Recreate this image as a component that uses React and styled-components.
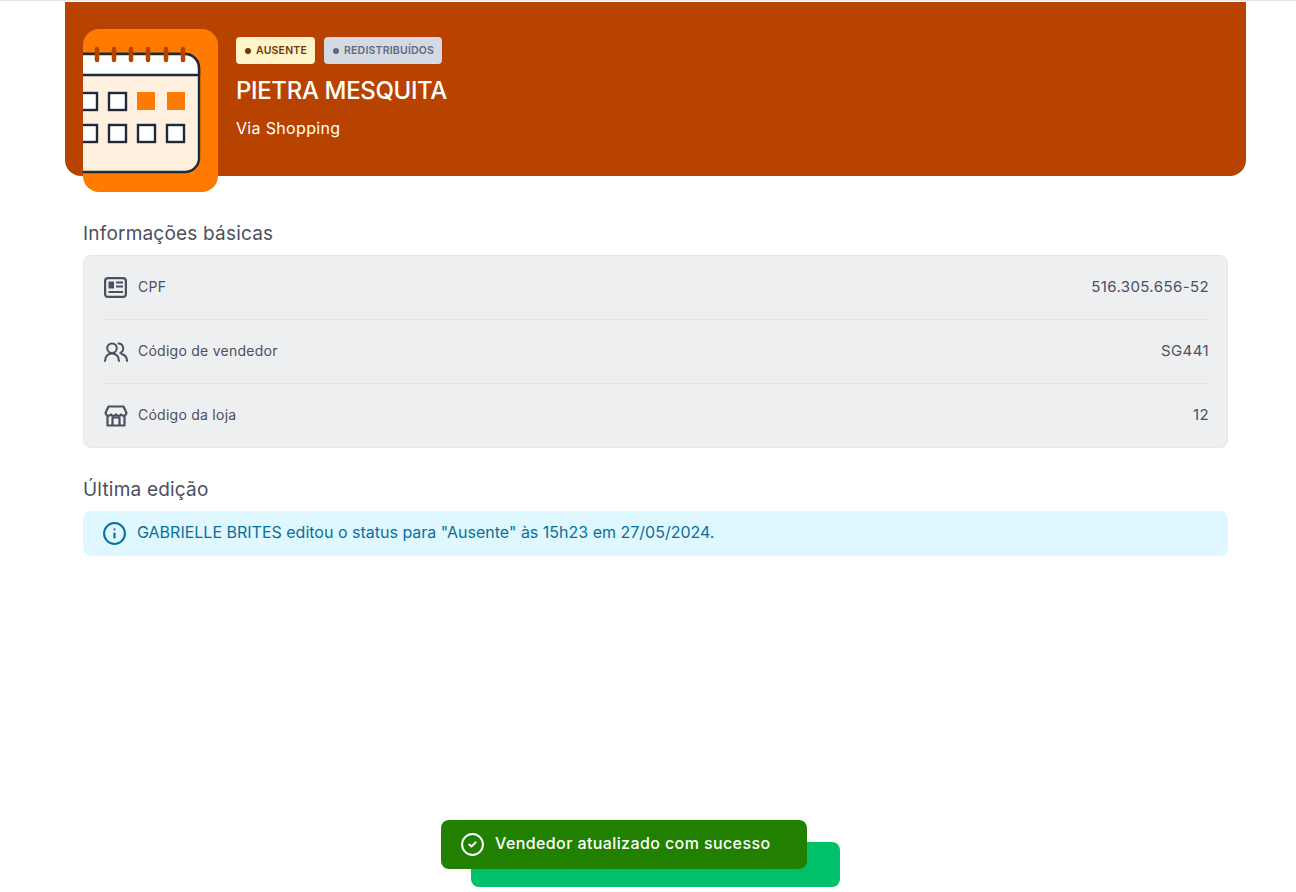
import styled, { createGlobalStyle } from "styled-components";
import { Info, CircleCheck } from "lucide-react";

const GlobalStyle = createGlobalStyle`
  html, body {
    margin: 0;
    padding: 0;
    background: #fff;
    font-family: "Inter", "Liberation Sans", sans-serif;
  }
  * {
    box-sizing: border-box;
  }
`

const rings = [14, 31, 48, 65, 83, 100];
const emptySquares = [
  [-3, 64], [26, 64],
  [-3, 96], [26, 96], [55, 96], [84, 96],
];
const orangeSquares = [54, 84];

const CalendarArt = () => (
  <svg width="135" height="163" viewBox="0 0 135 163">
    <rect x="-40" y="25" width="156" height="118" rx="14" fill="#fff0e0" stroke="#1f2937" strokeWidth="2.4" />
    <path d="M-40 46V39a14 14 0 0 1 14-14H102a14 14 0 0 1 14 14v7z" fill="#fff" stroke="#1f2937" strokeWidth="2.4" />
    {rings.map(x => (
      <line key={x} x1={x} y1="20" x2={x} y2="31" stroke="#b84300" strokeWidth="4.5" strokeLinecap="round" />
    ))}
    {emptySquares.map(([x, y]) => (
      <rect key={`${x}-${y}`} x={x} y={y} width="17" height="17" fill="#fff" stroke="#1f2937" strokeWidth="2.4" />
    ))}
    {orangeSquares.map(x => (
      <rect key={x} x={x} y="63" width="18" height="18" fill="#ff7a00" />
    ))}
  </svg>
)

const NewsIcon = () => (
  <svg width="23" height="21" viewBox="0 0 23 21" fill="none" stroke="#4b5060" strokeWidth="2.2">
    <rect x="1.1" y="1.1" width="20.8" height="18.8" rx="3" />
    <rect x="4.5" y="4.5" width="5.5" height="7" fill="#4b5060" stroke="none" />
    <path d="M12 5.5h7M12 9.5h7M4.5 15h14.5" strokeWidth="1.8" />
  </svg>
)

const PeopleIcon = () => (
  <svg width="24" height="20" viewBox="0 0 24 20" fill="none" stroke="#4b5060" strokeWidth="2" strokeLinecap="round">
    <circle cx="8" cy="6.2" r="4.8" />
    <path d="M1 19c0-4.5 3-7.5 7-7.5s7 3 7 7.5" />
    <path d="M14.5 1.6a4.8 4.8 0 0 1 1.8 9.2" />
    <path d="M17.5 12c3 .8 5.5 3.5 5.5 7" />
  </svg>
)

const StoreIcon = () => (
  <svg width="24" height="22" viewBox="0 0 24 22" fill="none" stroke="#4b5060" strokeWidth="2.2" strokeLinejoin="round">
    <path d="M4.5 1.5h15L22.5 8a2.9 2.9 0 0 1-5.3 1.5 3.2 3.2 0 0 1-5.2 0 3.2 3.2 0 0 1-5.2 0A2.9 2.9 0 0 1 1.5 8z" />
    <path d="M3.5 11v9.5h17V11" />
    <path d="M8.5 20.5V12.5h7v8" />
  </svg>
)

export default function App() {
  return (
    <Page>
      <GlobalStyle />
      <Banner>
        <Avatar>
          <CalendarArt />
        </Avatar>
        <BannerText>
          <Badges>
            <Badge $bg="#fff3c9" $color="#6d3a0a">
              <Dot />
              AUSENTE
            </Badge>
            <Badge $bg="#d5d9e2" $color="#5f6b80">
              <Dot />
              REDISTRIBUÍDOS
            </Badge>
          </Badges>
          <Name>PIETRA MESQUITA</Name>
          <Store>Via Shopping</Store>
        </BannerText>
      </Banner>

      <Content>
        <SectionTitle>Informações básicas</SectionTitle>
        <InfoCard>
          <Row>
            <RowLabel>
              <IconSlot><NewsIcon /></IconSlot>
              <LabelText>CPF</LabelText>
            </RowLabel>
            <RowValue>516.305.656-52</RowValue>
          </Row>
          <Row>
            <RowLabel>
              <IconSlot><PeopleIcon /></IconSlot>
              <LabelText>Código de vendedor</LabelText>
            </RowLabel>
            <RowValue>SG441</RowValue>
          </Row>
          <Row>
            <RowLabel>
              <IconSlot><StoreIcon /></IconSlot>
              <LabelText>Código da loja</LabelText>
            </RowLabel>
            <RowValue>12</RowValue>
          </Row>
        </InfoCard>

        <SectionTitle>Última edição</SectionTitle>
        <Notice>
          <Info size={25} strokeWidth={2} />
          <NoticeText>GABRIELLE BRITES editou o status para "Ausente" às 15h23 em 27/05/2024.</NoticeText>
        </Notice>
      </Content>

      <SaveButton>Confirmar</SaveButton>
      <Toast>
        <CircleCheck size={25} strokeWidth={1.9} />
        <NoticeText>Vendedor atualizado com sucesso</NoticeText>
      </Toast>
    </Page>
  )
}

const Page = styled.div`
  position: relative;
  width: 1296px;
  height: 892px;
  overflow: hidden;
  border-top: 1px solid #e5e7eb;
  padding-top: 1px;
`

const Banner = styled.header`
  display: flex;
  gap: 18px;
  width: 1181px;
  height: 174px;
  margin-left: 65px;
  padding: 27px 18px 0;
  background-color: #b84300;
  border-radius: 0 0 16px 16px;
`

const Avatar = styled.div`
  flex: none;
  width: 135px;
  height: 163px;
  background-color: #ff7a00;
  border-radius: 16px;
  overflow: hidden;

  svg {
    display: block;
  }
`

const BannerText = styled.div`
  display: flex;
  flex-direction: column;
  padding-top: 8px;
`

const Badges = styled.div`
  display: flex;
  gap: 9px;
`

const Badge = styled.span`
  display: flex;
  align-items: center;
  gap: 5px;
  height: 27px;
  padding: 0 8px 0 9px;
  border-radius: 4px;
  background-color: ${props => props.$bg};
  color: ${props => props.$color};
  font-size: 10.5px;
  font-weight: 600;
  letter-spacing: 0.2px;
`

const Dot = styled.i`
  width: 6px;
  height: 6px;
  border-radius: 50%;
  background-color: currentColor;
`

const Name = styled.h1`
  margin: 11px 0 0;
  color: #fff;
  font-size: 24px;
  line-height: 32px;
  font-weight: 500;
  letter-spacing: -0.35px;
`

const Store = styled.p`
  margin: 9px 0 0;
  color: #fff;
  font-size: 16px;
  line-height: 24px;
  letter-spacing: 0.33px;
`

const Content = styled.main`
  width: 1145px;
  margin: 44px 0 0 83px;
`

const SectionTitle = styled.h2`
  margin: 0 0 9px;
  padding-top: 1px;
  color: #4b5060;
  font-size: 19px;
  line-height: 25px;
  font-weight: 400;
  letter-spacing: 0.2px;
`

const InfoCard = styled.section`
  height: 193px;
  margin-bottom: 28px;
  padding: 0 18px;
  background-color: #eeeff1;
  border: 1px solid #e5e7eb;
  border-radius: 8px;
`

const Row = styled.div`
  display: flex;
  align-items: center;
  justify-content: space-between;
  height: 64px;
  border-bottom: 1px solid #dfe1e5;

  &:last-child {
    border-bottom: 0;
    padding-bottom: 1px;
  }
`

const RowLabel = styled.div`
  display: flex;
  align-items: center;
  gap: 9px;
`

const LabelText = styled.span`
  margin-bottom: 2px;
  color: #4b5060;
  font-size: 14px;
  letter-spacing: 0.25px;
`

const IconSlot = styled.span`
  display: flex;
  align-items: center;
  justify-content: center;
  width: 27px;
`

const RowValue = styled.span`
  margin-bottom: 2px;
  color: #4b5060;
  font-size: 15px;
  letter-spacing: 0.4px;
`

const Notice = styled.div`
  display: flex;
  align-items: center;
  gap: 10px;
  height: 45px;
  padding: 0 19px;
  background-color: #dff7ff;
  border-radius: 8px;
  color: #0a6f9b;
  font-size: 16px;
`

const NoticeText = styled.span`
  margin-bottom: 3px;
`

const SaveButton = styled.button`
  position: absolute;
  left: 471px;
  top: 841px;
  width: 369px;
  height: 45px;
  padding: 0 0 3px;
  border: 0;
  border-radius: 8px;
  background-color: #00c16a;
  color: #fff;
  font: 500 16px "Inter", sans-serif;
  letter-spacing: 0.5px;
`

const Toast = styled.div`
  position: absolute;
  left: 441px;
  top: 819px;
  display: flex;
  align-items: center;
  gap: 10px;
  width: 366px;
  height: 49px;
  padding: 0 19px;
  background-color: #228000;
  border-radius: 8px;
  color: #fff;
  font-size: 16px;
  font-weight: 500;
  letter-spacing: 0.4px;
`
